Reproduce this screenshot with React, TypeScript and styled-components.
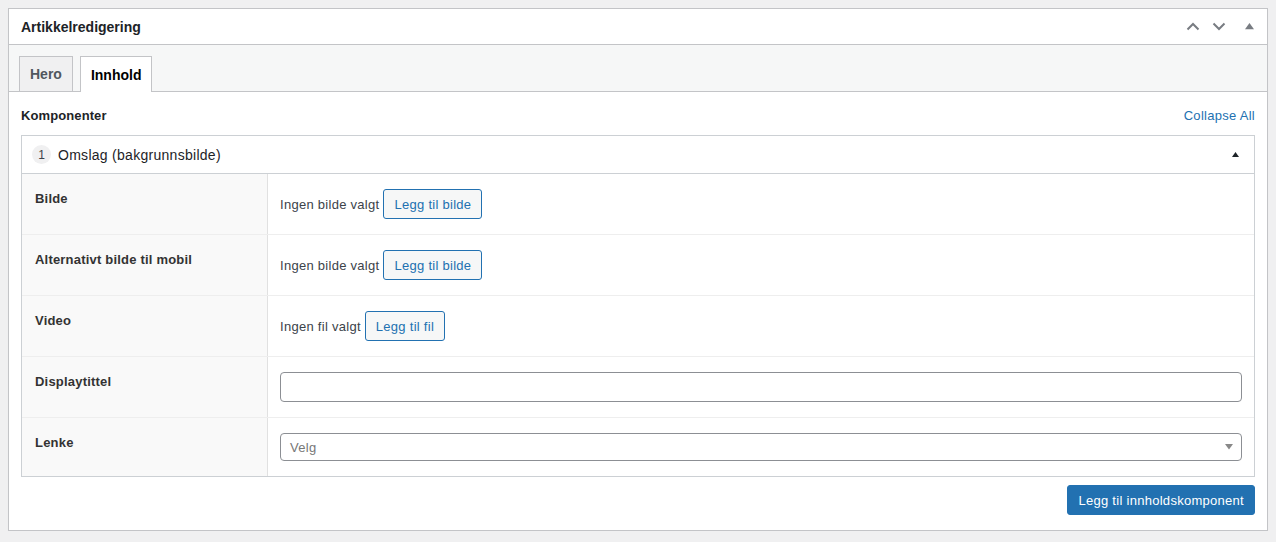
import React from "react";
import styled, { createGlobalStyle } from "styled-components";

const Global = createGlobalStyle`
  html, body { margin: 0; padding: 0; }
  body {
    background: #f0f0f1;
    font-family: "Liberation Sans", Arial, sans-serif;
    color: #1d2327;
    font-size: 13px;
  }
  #root { padding: 8px 8px 0 8px; }
`;

const Panel = styled.div`
  background: #fff;
  border: 1px solid #c3c4c7;
  box-shadow: 0 1px 1px rgba(0,0,0,0.04);
`;

const PanelHeader = styled.div`
  display: flex;
  align-items: center;
  height: 35px;
  padding: 0 3px 0 12px;
  border-bottom: 1px solid #c3c4c7;
`;

const PanelTitle = styled.h2`
  flex: 1;
  margin: 0;
  font-size: 14px;
  font-weight: 700;
  color: #1d2327;
`;

const HeaderActions = styled.div`
  display: flex;
  align-items: center;
  gap: 5px;
  color: #787c82;
`;

const IconBtn = styled.span<{ $w?: number }>`
  display: inline-flex;
  align-items: center;
  justify-content: center;
  width: ${(p) => p.$w ?? 21}px;
  height: 24px;
`;

const TabBar = styled.div`
  display: flex;
  gap: 7px;
  padding: 11px 10px 0;
  background: #f6f7f7;
  border-bottom: 1px solid #c3c4c7;
  height: 35px;
`;

const Tab = styled.div<{ $active?: boolean }>`
  display: flex;
  align-items: center;
  padding: 0 10px;
  font-size: 14px;
  font-weight: 600;
  border: 1px solid #c3c4c7;
  border-bottom: none;
  background: ${(p) => (p.$active ? "#fff" : "#f0f0f1")};
  color: ${(p) => (p.$active ? "#000" : "#50575e")};
  margin-bottom: ${(p) => (p.$active ? "-1px" : "0")};
  height: ${(p) => (p.$active ? "36px" : "35px")};
  box-sizing: border-box;
`;

const Content = styled.div`
  padding: 0 12px 15px;
  letter-spacing: 0.28px;
`;

const SectionHead = styled.div`
  display: flex;
  align-items: center;
  justify-content: space-between;
  height: 43px;
  padding-top: 4px;
  box-sizing: border-box;
`;

const SectionLabel = styled.span`
  font-weight: 700;
  font-size: 13px;
  color: #1d2327;
  letter-spacing: 0.1px;
`;

const LinkText = styled.a`
  color: #2271b1;
  text-decoration: none;
  font-size: 13px;
`;

const Layout = styled.div`
  border: 1px solid #ccd0d4;
  background: #fff;
`;

const LayoutHead = styled.div`
  display: flex;
  align-items: center;
  height: 37px;
  padding: 0 15px 0 10px;
  border-bottom: 1px solid #ccd0d4;
  gap: 7px;
`;

const Badge = styled.span`
  display: inline-flex;
  align-items: center;
  justify-content: center;
  width: 19px;
  height: 19px;
  border-radius: 50%;
  background: #f0f0f1;
  font-size: 12px;
  letter-spacing: 0;
  color: #3c434a;
`;

const LayoutTitle = styled.span`
  flex: 1;
  font-size: 14px;
  color: #1d2327;
`;

const Row = styled.div<{ $first?: boolean }>`
  display: grid;
  grid-template-columns: 246px 1fr;
  border-top: ${(p) => (p.$first ? "none" : "1px solid #eeeeee")};
`;

const LabelCell = styled.div`
  background: #f9f9f9;
  border-right: 1px solid #e1e1e1;
  padding: 17px 13px 15px;
  font-weight: 700;
  font-size: 13px;
  color: #333;
  letter-spacing: 0.2px;
`;

const ValueCell = styled.div`
  display: flex;
  align-items: center;
  gap: 4px;
  padding: 15px 12px;
`;

const Muted = styled.span`
  color: #3c434a;
  font-size: 13px;
`;

const SecondaryButton = styled.button`
  height: 30px;
  padding: 0 10px;
  border: 1px solid #2271b1;
  border-radius: 3px;
  background: #f6f7f7;
  color: #2271b1;
  font-family: inherit;
  font-size: 13px;
  letter-spacing: inherit;
`;

const TextInput = styled.input`
  flex: 1;
  height: 30px;
  box-sizing: border-box;
  border: 1px solid #8c8f94;
  border-radius: 4px;
  padding: 0 8px;
  font-family: inherit;
  font-size: 13px;
`;

const SelectBox = styled.div`
  flex: 1;
  display: flex;
  align-items: center;
  height: 28px;
  box-sizing: border-box;
  border: 1px solid #8c8f94;
  border-radius: 4px;
  padding: 0 8px 0 9px;
  color: #777;
  font-size: 13px;
`;

const SelectValue = styled.span`
  flex: 1;
`;

const Footer = styled.div`
  display: flex;
  justify-content: flex-end;
  padding-top: 8px;
`;

const PrimaryButton = styled.button`
  height: 30px;
  padding: 0 10px;
  border: 1px solid #2271b1;
  border-radius: 3px;
  background: #2271b1;
  color: #fff;
  font-family: inherit;
  font-size: 13px;
  letter-spacing: inherit;
`;

const Chevron = ({ up }: { up?: boolean }) => (
  <svg width="14" height="9" viewBox="0 0 14 9">
    <path
      d={up ? "M1.5 7.5 L7 2 L12.5 7.5" : "M1.5 1.5 L7 7 L12.5 1.5"}
      fill="none"
      stroke="#787c82"
      strokeWidth="2"
    />
  </svg>
);

const Tri = ({ color = "#787c82", size = 8, down }: { color?: string; size?: number; down?: boolean }) => (
  <svg width={size} height={size * 0.7} viewBox="0 0 10 7">
    <path d={down ? "M0 0 L10 0 L5 7 Z" : "M0 7 L10 7 L5 0 Z"} fill={color} />
  </svg>
);

export default function App() {
  return (
    <>
      <Global />
      <Panel>
        <PanelHeader>
          <PanelTitle>Artikkelredigering</PanelTitle>
          <HeaderActions>
            <IconBtn><Chevron up /></IconBtn>
            <IconBtn><Chevron /></IconBtn>
            <IconBtn $w={30}><Tri size={9} /></IconBtn>
          </HeaderActions>
        </PanelHeader>
        <TabBar>
          <Tab>Hero</Tab>
          <Tab $active>Innhold</Tab>
        </TabBar>
        <Content>
          <SectionHead>
            <SectionLabel>Komponenter</SectionLabel>
            <LinkText href="#">Collapse All</LinkText>
          </SectionHead>
          <Layout>
            <LayoutHead>
              <Badge>1</Badge>
              <LayoutTitle>Omslag (bakgrunnsbilde)</LayoutTitle>
              <Tri color="#1d2327" size={7} />
            </LayoutHead>
            <Row $first>
              <LabelCell>Bilde</LabelCell>
              <ValueCell>
                <Muted>Ingen bilde valgt</Muted>
                <SecondaryButton>Legg til bilde</SecondaryButton>
              </ValueCell>
            </Row>
            <Row>
              <LabelCell>Alternativt bilde til mobil</LabelCell>
              <ValueCell>
                <Muted>Ingen bilde valgt</Muted>
                <SecondaryButton>Legg til bilde</SecondaryButton>
              </ValueCell>
            </Row>
            <Row>
              <LabelCell>Video</LabelCell>
              <ValueCell>
                <Muted>Ingen fil valgt</Muted>
                <SecondaryButton>Legg til fil</SecondaryButton>
              </ValueCell>
            </Row>
            <Row>
              <LabelCell>Displaytittel</LabelCell>
              <ValueCell>
                <TextInput />
              </ValueCell>
            </Row>
            <Row>
              <LabelCell>Lenke</LabelCell>
              <ValueCell>
                <SelectBox>
                  <SelectValue>Velg</SelectValue>
                  <Tri color="#888" size={8} down />
                </SelectBox>
              </ValueCell>
            </Row>
          </Layout>
          <Footer>
            <PrimaryButton>Legg til innholdskomponent</PrimaryButton>
          </Footer>
        </Content>
      </Panel>
    </>
  );
}
